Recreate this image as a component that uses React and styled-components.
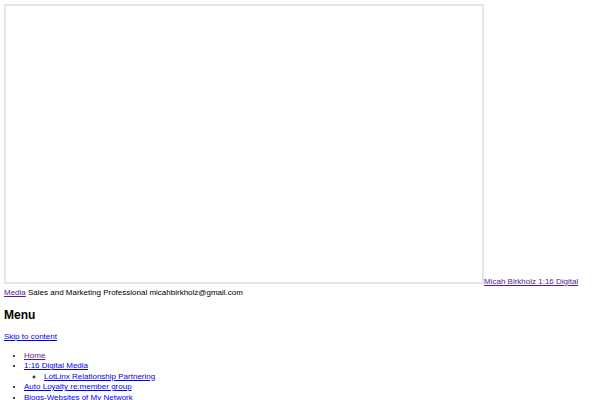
import React from "react";
import styled, { createGlobalStyle } from "styled-components";

const GlobalStyle = createGlobalStyle`
  body {
    margin: 4px;
    background: #fff;
    color: #000;
    font-family: "Liberation Sans", Arial, sans-serif;
    font-size: 8px;
    line-height: 10.5px;
  }
`;

const Header = styled.div``;

const VideoFrame = styled.span`
  display: inline-block;
  width: 476px;
  height: 276px;
  border: 2px solid #e6e6e6;
  background: #fff;
`;

const Link = styled.a`
  color: ${(p) => (p.$visited ? "#551a8b" : "#0000ee")};
  text-decoration: underline;
  cursor: pointer;
`;

const MenuTitle = styled.h2`
  font-size: 12px;
  line-height: 14px;
  font-weight: bold;
  margin: 10px 0;
`;

const SkipRow = styled.div``;

const NavList = styled.ul`
  margin: 8px 0;
  padding-left: 20px;
  list-style: disc;
`;

const SubList = styled.ul`
  margin: 0;
  padding-left: 20px;
  list-style: circle;
`;

const NavItem = styled.li``;

const menu = [
  { label: "Home", visited: true },
  {
    label: "1:16 Digital Media",
    children: ["LotLinx Relationship Partnering"],
  },
  { label: "Auto Loyalty re:member group" },
  { label: "Blogs-Websites of My Network" },
];

const App = () => {
  return (
    <>
      <GlobalStyle />
      <Header>
        <VideoFrame />
        <Link $visited>Micah Birkholz 1:16 Digital Media</Link> Sales and
        Marketing Professional micahbirkholz@gmail.com
      </Header>
      <MenuTitle>Menu</MenuTitle>
      <SkipRow>
        <Link>Skip to content</Link>
      </SkipRow>
      <NavList>
        {menu.map((item, idx) => (
          <NavItem key={idx}>
            <Link $visited={item.visited}>{item.label}</Link>
            {item.children && (
              <SubList>
                {item.children.map((c) => (
                  <NavItem key={c}>
                    <Link>{c}</Link>
                  </NavItem>
                ))}
              </SubList>
            )}
          </NavItem>
        ))}
      </NavList>
    </>
  );
};

export default App;
